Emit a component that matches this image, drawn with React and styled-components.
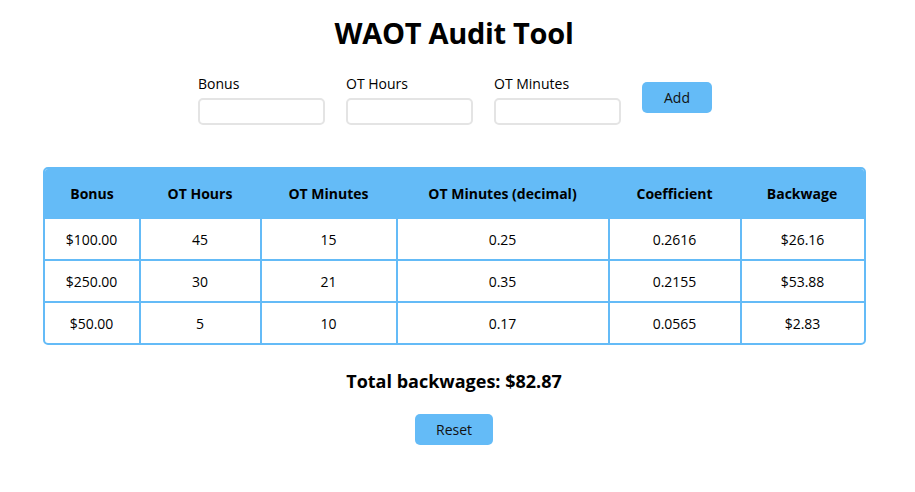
import React from 'react';
import styled, { createGlobalStyle } from 'styled-components';

const GlobalStyle = createGlobalStyle`
    body {
        margin: 0;
        background: #ffffff;
        color: #000000;
        font-family: "Open Sans", "Noto Sans", sans-serif;
    }
`;

const BLUE = '#64bbf7';

// styled components
const Page = styled.div`
    align-items: center;
    display: flex;
    flex-direction: column;
    width: 908px;
`;

const Title = styled.h1`
    font-size: 29px;
    font-weight: 700;
    letter-spacing: -0.3px;
    line-height: 36px;
    margin: 15px 0 0;
`;

const Form = styled.div`
    align-items: flex-end;
    display: flex;
    gap: 21px;
    margin-top: 23px;
    padding-left: 2px;
`;

const Field = styled.label`
    display: flex;
    flex-direction: column;
    gap: 4px;
`;

const FieldLabel = styled.span`
    font-size: 14px;
    line-height: 20px;
`;

const Input = styled.input`
    border: 2px solid #e4e4e4;
    border-radius: 5px;
    box-sizing: border-box;
    height: 27px;
    outline: none;
    width: 127px;
`;

const Button = styled.button`
    background: ${BLUE};
    border: none;
    border-radius: 5px;
    color: #111;
    font-family: inherit;
    font-size: 14px;
    height: 31px;
    margin-bottom: ${(p) => p.$lift || 0}px;
    margin-top: ${(p) => p.$top || 0}px;
    padding: 0;
    width: ${(p) => p.$width}px;
`;

const TableFrame = styled.div`
    border: 2px solid ${BLUE};
    border-radius: 5px;
    box-sizing: border-box;
    margin-top: 42px;
    overflow: hidden;
    width: 823px;
`;

const Table = styled.table`
    border-collapse: collapse;
    table-layout: fixed;
    width: 100%;
`;

const HeadCell = styled.th`
    background: ${BLUE};
    font-size: 14px;
    font-weight: 700;
    height: 48px;
    padding: 0;
    text-align: center;
`;

const Cell = styled.td`
    border: 2px solid ${BLUE};
    font-size: 14px;
    height: 40px;
    padding: 0;
    text-align: center;

    &:first-child {
        border-left: none;
    }
    &:last-child {
        border-right: none;
    }
    tr:last-child > & {
        border-bottom: none;
    }
`;

const Total = styled.div`
    font-size: 18px;
    font-weight: 700;
    line-height: 26px;
    margin-top: 23px;
`;

const columns = [
    { label: 'Bonus', width: 95 },
    { label: 'OT Hours', width: 121 },
    { label: 'OT Minutes', width: 136 },
    { label: 'OT Minutes (decimal)', width: 212 },
    { label: 'Coefficient', width: 132 },
    { label: 'Backwage', width: 123 },
];

const rows = [
    ['$100.00', '45', '15', '0.25', '0.2616', '$26.16'],
    ['$250.00', '30', '21', '0.35', '0.2155', '$53.88'],
    ['$50.00', '5', '10', '0.17', '0.0565', '$2.83'],
];

const App = () => {
    return (
        <Page>
            <GlobalStyle />
            <Title>WAOT Audit Tool</Title>
            <Form>
                {['Bonus', 'OT Hours', 'OT Minutes'].map((label) => (
                    <Field key={label}>
                        <FieldLabel>{label}</FieldLabel>
                        <Input type="text" />
                    </Field>
                ))}
                <Button $width={70} $lift={12}>Add</Button>
            </Form>
            <TableFrame>
                <Table>
                    <colgroup>
                        {columns.map((col) => (
                            <col key={col.label} style={{ width: col.width }} />
                        ))}
                    </colgroup>
                    <thead>
                        <tr>
                            {columns.map((col) => (
                                <HeadCell key={col.label}>{col.label}</HeadCell>
                            ))}
                        </tr>
                    </thead>
                    <tbody>
                        {rows.map((row, rowIndex) => (
                            <tr key={`row-${rowIndex}`}>
                                {row.map((value, cellIndex) => (
                                    <Cell key={`cell-${rowIndex}-${cellIndex}`}>{value}</Cell>
                                ))}
                            </tr>
                        ))}
                    </tbody>
                </Table>
            </TableFrame>
            <Total>Total backwages: $82.87</Total>
            <Button $width={78} $top={20}>Reset</Button>
        </Page>
    );
};

export default App;
